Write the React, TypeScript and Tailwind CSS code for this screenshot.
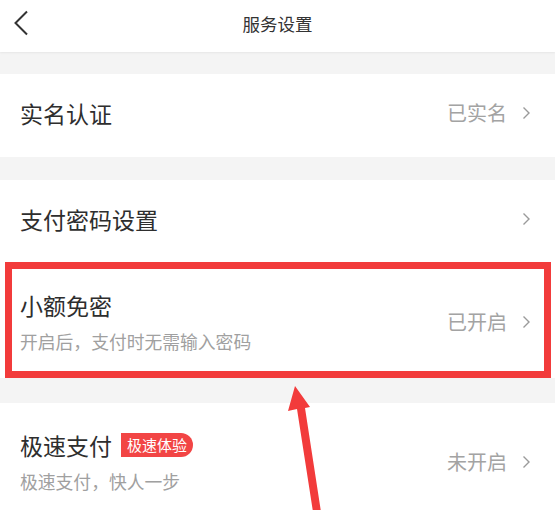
import React from "react";

const font = { fontFamily: '"Noto Sans CJK SC", "Noto Sans", sans-serif' };

function Chevron() {
  return (
    <svg width="9" height="14" viewBox="0 0 9 14" className="shrink-0">
      <path d="M1.5 1.5 L7 7 L1.5 12.5" fill="none" stroke="#9a9a9a" strokeWidth="1.4" />
    </svg>
  );
}

function Row({
  title,
  sub,
  value,
  badge,
  className,
}: {
  title: string;
  sub?: string;
  value?: string;
  badge?: string;
  className: string;
}) {
  return (
    <div className={`flex items-center bg-white pl-5 pr-[24px] ${className}`}>
      <div className="flex flex-1 flex-col gap-[10px]">
        <div className="flex items-center gap-[9px]">
          <span className="text-[23px] leading-[28px] text-[#2e2e2e]">{title}</span>
          {badge && (
            <span className="rounded-tl-[11px] rounded-tr-full rounded-br-full rounded-bl-[3px] bg-[#f24545] px-[6px] text-[15px] leading-[24px] text-white">
              {badge}
            </span>
          )}
        </div>
        {sub && <span className="text-[17.8px] leading-[24px] text-[#a0a0a0]">{sub}</span>}
      </div>
      {value && <span className="mr-[15px] text-[20px] text-[#a3a3a3]">{value}</span>}
      <Chevron />
    </div>
  );
}

export default function App() {
  return (
    <div className="relative h-[510px] w-full overflow-hidden bg-[#f4f4f4]" style={font}>
      <div className="relative flex h-[52px] items-center justify-center bg-white pb-[3px] shadow-[0_1px_2px_rgba(0,0,0,0.06)]">
        <svg width="16" height="26" viewBox="0 0 16 26" className="absolute left-[13px] top-[10px]">
          <path d="M14 1.5 L2.5 13 L14 24.5" fill="none" stroke="#333" strokeWidth="2" />
        </svg>
        <span className="text-[17.5px] text-[#333]">服务设置</span>
      </div>
      <div className="h-[22px]" />
      <Row title="实名认证" value="已实名" className="h-[83px] pb-[5px]" />
      <div className="h-[23px]" />
      <Row title="支付密码设置" className="h-[83px] pb-[5px]" />
      <Row
        title="小额免密"
        sub="开启后，支付时无需输入密码"
        value="已开启"
        className="h-[115px] pt-[3px]"
      />
      <div className="h-[25px]" />
      <Row
        title="极速支付"
        badge="极速体验"
        sub="极速支付，快人一步"
        value="未开启"
        className="h-[120px] pb-[2px]"
      />

      {/* annotation overlay */}
      <div className="pointer-events-none absolute left-[5px] top-[262px] h-[116px] w-[546px] border-[7px] border-[#f23b3b]" />
      <svg className="pointer-events-none absolute left-0 top-0" width="555" height="510" viewBox="0 0 555 510">
        <polygon
          points="295,386 288,411 297,409 313,512 321,512 305,408 310,407"
          fill="#f23b3b"
        />
      </svg>
    </div>
  );
}
